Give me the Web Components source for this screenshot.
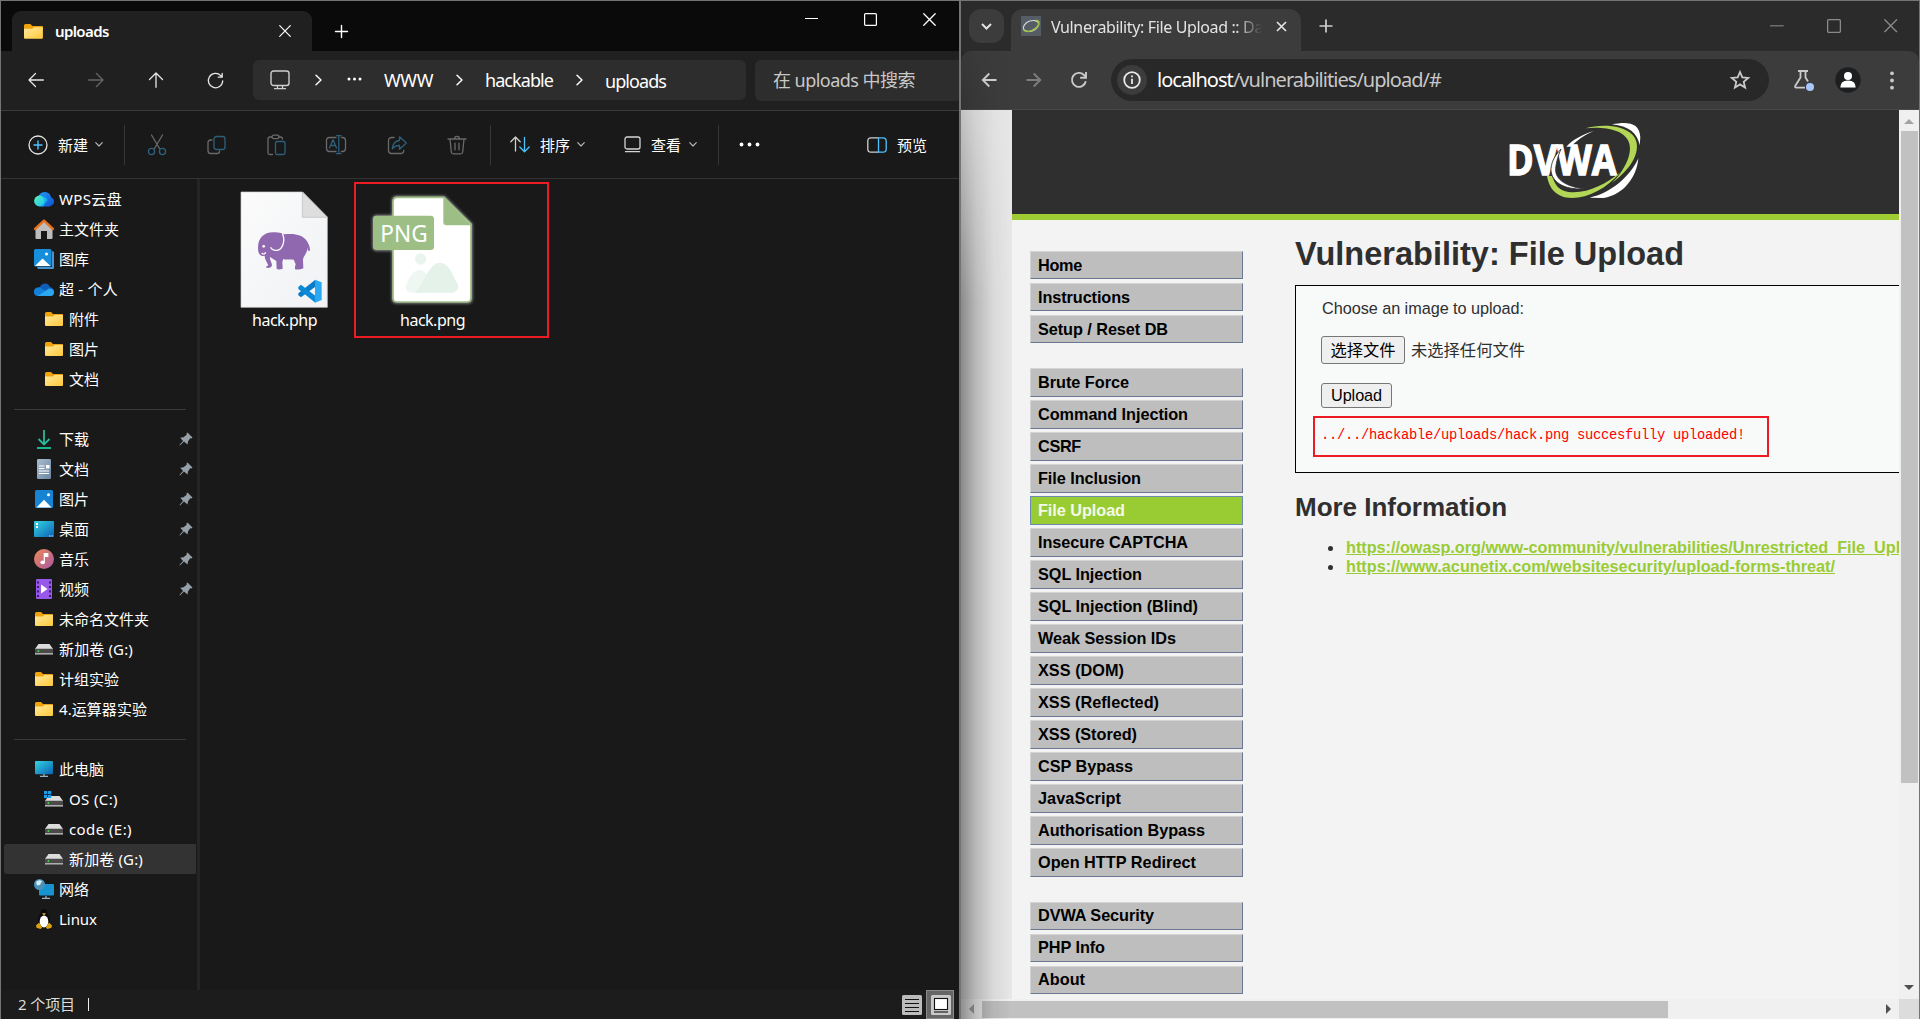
<!DOCTYPE html>
<html lang="zh-CN">
<head>
<meta charset="utf-8">
<title>uploads</title>
<style>
html,body{margin:0;padding:0;background:#191919}
body{width:1920px;height:1019px;overflow:hidden;font-family:"Noto Sans","Noto Sans CJK SC",sans-serif}
</style>
</head>
<body>
<split-desktop>
  <file-explorer slot="left"></file-explorer>
  <web-browser slot="right"><dvwa-page></dvwa-page></web-browser>
</split-desktop>
<script>
// Every glyph is drawn in pixel units: [width, height, markup]
const folder = `<path d="M0 1.5Q0 0 1.5 0H6l2 2h9.500Q18 2 18 3V6H0Z" fill="#f0a30a"/><path d="M0 4.500H8L9.500 3H18V13Q18 14 17 14H1Q0 14 0 13Z" fill="url(#fo)"/><defs><linearGradient id="fo" x1="0" y1="0" x2="1" y2="1"><stop offset="0" stop-color="#ffe9a0"/><stop offset="1" stop-color="#ffc938"/></linearGradient></defs>`;
const disk = `<path d="M3.500 0h11L18 5v5.500H0V5Z" fill="#dcdcdc"/><rect y="4.800" width="18" height="6" rx=".8" fill="#4a4a4a"/><path d="M0 9.700h18" stroke="#b9b9b9" stroke-width="1.200"/><circle cx="3.400" cy="7" r=".9" fill="#3fe04a"/>`;
const st = (c, w = 1.3) => `fill="none" stroke="${c}" stroke-width="${w}" stroke-linecap="round" stroke-linejoin="round"`;
const G = '#6a6a6a', B = '#2d607b';
const ICONS = {
  folder: [18, 14, folder],
  x: [12, 12, `<path d="M.7.7 11.300 11.300M11.300.7.7 11.300" ${st('currentColor', 1.2)}/>`],
  plus: [13, 13, `<path d="M6.500.5v12M.5 6.500h12" ${st('currentColor', 1.4)}/>`],
  min: [13, 13, `<path d="M0 6.500h13" stroke="currentColor"/>`],
  max: [13, 13, `<rect x=".6" y=".6" width="11.800" height="11.800" rx="1" fill="none" stroke="currentColor" stroke-width="1.200"/>`],
  back: [16, 16, `<path d="M15.300 8H1M7.500 1.500 1 8l6.500 6.500" ${st('currentColor')}/>`],
  fwd: [16, 16, `<path d="M.7 8H15M8.500 1.500 15 8l-6.500 6.500" ${st('currentColor')}/>`],
  up: [16, 16, `<path d="M8 15.300V1M1.500 7.500 8 1l6.500 6.500" ${st('currentColor')}/>`],
  reload: [17, 17, `<path d="M15.700 9a7.200 7.200 0 1 1-2-5.400L15 5M15.200 1.500V5.200H11.300" ${st('currentColor')}/>`],
  monitor: [20, 20, `<rect x="1" y="1" width="18" height="14.500" rx="2.500" ${st('#cfcfcf', 1.4)}/><path d="M7.500 16v2.500M12.500 16v2.500M4.500 18.700h11" ${st('#cfcfcf', 1.3)}/>`],
  chev: [7, 12, `<path d="M1 1.200 6 6 1 10.800" ${st('#fff', 1.4)}/>`],
  down: [8, 5, `<path d="M.7.700 4 4 7.300.700" ${st('#bbb', 1.1)}/>`],
  dots: [15, 4, `<g fill="#fff"><circle cx="2" cy="2" r="1.500"/><circle cx="7.500" cy="2" r="1.500"/><circle cx="13" cy="2" r="1.500"/></g>`],
  more: [21, 5, `<g fill="#fff"><circle cx="2.500" cy="2.500" r="1.900"/><circle cx="10.500" cy="2.500" r="1.900"/><circle cx="18.500" cy="2.500" r="1.900"/></g>`],
  add: [20, 20, `<circle cx="10" cy="10" r="9" ${st('#e4e4e4')}/><path d="M10 6v8M6 10h8" ${st('#4cc2ff', 1.4)}/>`],
  cut: [20, 22, `<path d="M4.500 1 12.500 14.500M15.500 1 7.500 14.500" ${st(G)}/><circle cx="4.500" cy="17.500" r="3.100" ${st(B)}/><circle cx="15.500" cy="17.500" r="3.100" ${st(B)}/>`],
  copy: [20, 20, `<g transform="translate(.5 0)"><path d="M5.500 5H4Q1.500 5 1.500 7.500v8Q1.500 18.500 4 18.500h6.500Q13 18.500 13 16.500V16" ${st(G)}/><rect x="7.500" y="1.500" width="11" height="13" rx="2.500" ${st(B)}/></g>`],
  paste: [20, 22, `<g transform="translate(.5 0)"><path d="M5.500 3H3.500Q1.500 3 1.500 5v14Q1.500 20.500 3.500 20.500H6M12.500 3H14Q16 3 16 5" ${st(G)}/><rect x="5.500" y="1.200" width="7" height="3.400" rx="1.600" ${st(G)}/><rect x="9" y="7.500" width="9.500" height="13" rx="1.500" ${st(B)}/></g>`],
  rename: [22, 20, `<path d="M11 2.500H4.500Q1.500 2.500 1.500 5.500v8Q1.500 16.500 4.500 16.500H11M16.500 2.500h1Q20.500 2.500 20.500 5.500v8q0 3-3 3h-1" ${st(G)}/><path d="m4.500 13 3.300-8h.4l3.300 8M5.700 10.500h4.600M13.800.7v18M11.500.7h4.600M11.500 18.700h4.600" ${st(B)}/>`],
  share: [21, 20, `<path d="M7 2.500H5Q1.500 2.500 1.500 5.500v10Q1.500 18.500 4.500 18.500h9Q16.800 18.500 16.800 15.500" ${st(G)}/><path d="M12.500 5.500V1.800L19.300 8l-6.800 6.200v-3.700Q8 10.300 5.300 13.800 6 6 12.500 5.500Z" ${st(B)}/>`],
  trash: [20, 20, `<path d="M1 4h18M7.500 4Q7.500 1.300 10 1.300T12.500 4M3 4.200 4.300 17Q4.500 18.800 6.300 18.800h7.400Q15.500 18.800 15.700 17L17 4.200M8 8.200v6.600M12 8.200v6.600" ${st(G)}/>`],
  sort: [20, 17, `<path d="M5.500 15V1M.8 5.700 5.500 1l4.700 4.700" ${st('#cfcfcf')}/><path d="M14.500 1.500v14M9.800 11l4.700 4.700L19.200 11" ${st('#4cc2ff')}/>`],
  view: [17, 17, `<rect x="1" y="1" width="15" height="12" rx="2" ${st('#d5d5d5')}/><path d="M1.500 15.700h14" ${st('#d5d5d5')}/>`],
  preview: [20, 16, `<path d="M11 .8H4Q.8.8.8 4v8Q.8 15.200 4 15.200h7" ${st('#cfcfcf')}/><path d="M11.500.8H16Q19.200.8 19.200 4v8q0 3.200-3.200 3.200h-4.500Z" ${st('#4cc2ff')}/>`],
  wps: [20, 15, `<defs><linearGradient id="w1" x1="0" y1="0" x2="1" y2="1"><stop offset="0" stop-color="#5ff0b4"/><stop offset="1" stop-color="#16c4f5"/></linearGradient><linearGradient id="w2" x1="0" y1="0" x2="1" y2="1"><stop offset="0" stop-color="#1f9cf5"/><stop offset="1" stop-color="#1350d0"/></linearGradient></defs><path d="M4.500 4Q6.500 0 11 0 16 .3 17 5.200 20 6.500 20 9.700T15.500 14.400H8Z" fill="url(#w2)"/><circle cx="5.500" cy="9" r="5.400" fill="url(#w1)"/><path d="M5.500 14.400Q10 14 11.500 9.500L8.500 4.500Q12.500 5 13.500 8L9 14.400Z" fill="#19b4f7"/>`],
  home: [20, 20, `<path d="M1.500 9 10 2l8.500 7v10q0 1-1 1H13v-8H7v8H2.500q-1 0-1-1Z" fill="#bdbdbd"/><path d="M1 10 10 1.700 19 10" fill="none" stroke="#e8701a" stroke-width="2.400" stroke-linecap="round" stroke-linejoin="round"/>`],
  gallery: [20, 20, `<path d="M3 18h15V2l2 1v15.500q0 1.500-1 1.500H4Z" fill="#4b93cf"/><rect width="17.500" height="17.500" rx="1.500" fill="#178edb"/><path d="M1 17 8.500 9.500 16.500 17Z" fill="#fff"/><circle cx="12.500" cy="5" r="1.500" fill="#fff"/>`],
  onedrive: [20, 13, `<path d="M3.500 12.500A4 4 0 0 1 2 5Q4 4 5.500 4.500C8-.5 14-1 16 4q4 1 4 5T16 12.500Z" fill="#0f5fb8"/><path d="M0 8.500Q1 4 6 4.500l8 5L5 13H4Q0 13 0 8.500" fill="#1280d8"/><path d="M4 12.700 15 5.500Q20 5.500 20 9.200T16.500 13H4Z" fill="#2aa7ee"/>`],
  download: [16, 20, `<path d="M8 1v14M2.500 10 8 15.500 13.500 10" fill="none" stroke="#27b99a" stroke-width="1.800"/><path d="M1 19h14" stroke="#1fc7a0" stroke-width="1.800"/>`],
  doc: [14, 20, `<defs><linearGradient id="dc" x1="0" y1="0" x2="1" y2="1"><stop offset="0" stop-color="#a9bdd0"/><stop offset="1" stop-color="#6b86a3"/></linearGradient></defs><rect width="14" height="20" rx="1.200" fill="url(#dc)"/><path d="M2 7h5.500M2 9.500h5.500M2 12h10M2 14.500h10" stroke="#fff" stroke-width="1.100"/><path d="M9 6h3.500v3.500H9Z" fill="#fff"/>`],
  pic: [18, 18, `<rect width="18" height="18" rx="1.500" fill="#1784d3"/><path d="M1.500 17.500 9 9.700l7.500 7.800Z" fill="#fff"/><circle cx="13.500" cy="4.700" r="1.500" fill="#fff"/>`],
  desk: [20, 16, `<defs><linearGradient id="dk" x1="0" y1="0" x2="1" y2="1"><stop offset="0" stop-color="#35d4e0"/><stop offset="1" stop-color="#0b62b8"/></linearGradient></defs><rect width="20" height="16" rx="1" fill="url(#dk)"/><path d="M2 2h2v2H2ZM2 5h2v2H2Z" fill="#fff"/><path d="M15 15h1.500M17.500 15H19" stroke="#bfe3ff"/>`],
  music: [20, 20, `<defs><linearGradient id="mu" x1="0" y1="0" x2="1" y2="1"><stop offset="0" stop-color="#f08a55"/><stop offset="1" stop-color="#a857a5"/></linearGradient></defs><circle cx="10" cy="10" r="10" fill="url(#mu)"/><ellipse cx="8.700" cy="13.300" rx="2.300" ry="1.900" fill="#fff"/><path d="M10.300 13.300V4.500h3.500v3h-3" fill="#fff" stroke="#fff" stroke-width="1.200"/>`],
  video: [16, 20, `<rect width="16" height="20" rx="1.300" fill="#9858ea"/><path d="M2 2.500v16M14 2.500v16" stroke="#3d1a72" stroke-width="2" stroke-dasharray="2 2.500"/><path d="m5 5.500 6.500 4.500L5 14.500Z" fill="#fff"/>`],
  disk: [18, 11, disk],
  osdisk: [20, 16, `<g transform="translate(1 5)">${disk}</g><path d="M0 0H3.300V3.200H0ZM4 0H7.300V3.200H4ZM0 4H3.300V7H0ZM4 4H7.300V7H4Z" fill="#1e9bea"/>`],
  pc: [18, 16, `<defs><linearGradient id="pc" x1="0" y1="0" x2="1" y2="1"><stop offset="0" stop-color="#34d3df"/><stop offset="1" stop-color="#0a62b5"/></linearGradient></defs><rect width="18" height="13.300" rx="1" fill="url(#pc)"/><path d="M9 13v2M5 15.300h8" stroke="#9db0bd" stroke-width="1.300"/>`],
  net: [20, 20, `<rect x="5" y="5" width="15" height="11.500" rx="1" fill="#1793cf"/><path d="M12 17v2M8 19.300h8" stroke="#9db0bd" stroke-width="1.300"/><circle cx="5.500" cy="5.500" r="5.500" fill="#4a92b8"/><path d="M2 3Q5 0 8 2L6 6 3 6.500Z" fill="#d2ecf3"/>`],
  tux: [16, 20, `<path d="M8 0Q11 0 11.200 4 14.500 9 14.200 15L11 19H5L1.800 15Q1.500 9 4.800 4 5 0 8 0" fill="#0b0b0b"/><ellipse cx="8" cy="12.500" rx="4.300" ry="6" fill="#fff"/><path d="M6 4.200h4L8 6.500Z" fill="#f2b233"/><path d="M0 16.500 3 13.500 6.300 18.500 4.500 20 .5 18.700ZM16 16.500 13 13.500 9.700 18.500 11.500 20 15.500 18.700Z" fill="#dba216"/>`],
  pin: [14, 14, `<path d="M8.500.5 13.500 5.500 12.500 6.500 11.200 6.300 9 9.500 8.500 12.500 5 9.500 1 13.500.5 13 4 9 1.300 5.700 4.500 5.200 7.700 2.800 7.500 1.500Z" fill="#96a0a8"/>`],
  listview: [20, 20, `<rect width="20" height="20" rx="1.500" fill="#bcbcbc"/><path d="M3 4.500h14M3 8.500h14M3 12.500h14M3 16.500h14" stroke="#111" stroke-width="1.100"/>`],
  largeview: [20, 20, `<rect width="20" height="20" rx="1.500" fill="#c9c9c9"/><rect x="3.500" y="3.500" width="13" height="11" fill="#fff" stroke="#111" stroke-width="1.100"/><path d="M3 17h14" stroke="#111" stroke-width="1.100"/>`],
  cdown: [11, 7, `<path d="M1 1 5.500 5.500 10 1" fill="none" stroke="#e3e3e3" stroke-width="2"/>`],
  favicon: [20, 20, `<rect width="20" height="20" fill="#555c66"/><ellipse cx="10" cy="10" rx="8" ry="5" transform="rotate(-22 10 10)" fill="none" stroke="#d4d8da" stroke-width="1.100"/><path d="M2.300 13.500Q4 17 11 14.500 18.500 11 18 6 17.500 4.300 15 4.200" fill="none" stroke="#9dc043" stroke-width="1.500"/>`],
  cback: [16, 16, `<path d="M15.500 8H2M8.300 1.500 1.800 8l6.500 6.500" fill="none" stroke="currentColor" stroke-width="1.900"/>`],
  cfwd: [16, 16, `<path d="M.5 8H14M7.700 1.500 14.200 8l-6.500 6.500" fill="none" stroke="currentColor" stroke-width="1.900"/>`],
  creload: [18, 18, `<path d="M15.800 10.300A7 7 0 1 1 14 4L16 6" fill="none" stroke="#c9c9c9" stroke-width="1.900"/><path d="M16 1v5.800h-5.800" fill="none" stroke="#c9c9c9" stroke-width="1.900"/>`],
  cx: [11, 11, `<path d="M1 1 10 10M10 1 1 10" stroke="currentColor" stroke-width="1.700"/>`],
  cplus: [14, 14, `<path d="M7 .5v13M.5 7h13" stroke="#d0d0d0" stroke-width="1.700"/>`],
  info: [30, 30, `<circle cx="15" cy="15" r="15" fill="#3c3c3c"/><circle cx="15" cy="15" r="7.800" fill="none" stroke="#e8e8e8" stroke-width="1.800"/><path d="M15 13.800v5.200M15 10.500v1.800" stroke="#e8e8e8" stroke-width="1.800"/>`],
  star: [20, 20, `<path d="M10 2 12.300 7.400 18.200 7.900 13.700 11.800 15.100 17.500 10 14.400 4.900 17.500 6.300 11.800 1.800 7.900 7.700 7.400Z" fill="none" stroke="#c9c9c9" stroke-width="1.800"/>`],
  flask: [22, 22, `<path d="M5 2h10M7.500 2v6.500L2.200 17q-.6 1.600 1 1.600H12M12.500 2v6.500L15 12.500" fill="none" stroke="#c9c9c9" stroke-width="1.800"/><circle cx="17" cy="18" r="4" fill="#a8c7fa"/>`],
  avatar: [26, 26, `<circle cx="13" cy="13" r="12.700" fill="#1c1e1f"/><circle cx="13" cy="9" r="4" fill="#fff"/><path d="M5.300 20.500Q5.300 13.500 13 13.500T20.700 20.500Z" fill="#fff"/>`],
  kebab: [4, 19, `<g fill="#c9c9c9"><circle cx="2" cy="2.300" r="1.900"/><circle cx="2" cy="9.500" r="1.900"/><circle cx="2" cy="16.700" r="1.900"/></g>`],
  tri: [10, 5, `<path d="M0 5 5 0 10 5Z" fill="currentColor"/>`],
  triD: [10, 5, `<path d="M0 0 5 5 10 0Z" fill="currentColor"/>`],
  triL: [5, 10, `<path d="M5 0 0 5 5 10Z" fill="currentColor"/>`],
  triR: [5, 10, `<path d="M0 0 5 5 0 10Z" fill="currentColor"/>`]
};
const define = (name, html, init) => customElements.define(name, class extends HTMLElement {
  connectedCallback() {
    if (this.shadowRoot) return;
    this.attachShadow({ mode: 'open' }).innerHTML = typeof html === 'function' ? html(this) : html;
    if (init) init(this);
  }
});

define('ui-icon', el => {
  const [w, h, m] = ICONS[el.getAttribute('name')];
  const k = +(el.getAttribute('scale') || 1);
  return `<style>:host{display:block;flex:none;width:${w * k}px;height:${h * k}px}svg{display:block;overflow:visible}</style><svg width="${w * k}" height="${h * k}" viewBox="0 0 ${w} ${h}">${m}</svg>`;
});

define('split-desktop', `<style>:host{display:grid;grid-template-columns:960px 960px;height:1019px;overflow:hidden}</style><slot name="left"></slot><slot name="right"></slot>`);

/* ---------- File explorer ---------- */
define('explorer-tabs', `<style>
:host{display:flex;height:50px;background:#0a0a0a;color:#fff;align-items:flex-start}
.tab{display:flex;align-items:center;box-sizing:border-box;width:300px;height:40px;margin:10px 0 0 11px;padding:0 21px 0 12px;background:#202020;border-radius:9px 9px 0 0;font:600 15px/22px "Noto Sans"}
.tab fit-text{margin:0 auto 0 12px}
.tab ui-icon[name=x]{margin-top:-1px}
.new{margin:24px auto 0 22.500px}
.ctl{display:flex;gap:46px;margin:12px 23.500px 0 0}
.ctl ui-icon[name=min]{margin-top:-1px}
</style><div class="tab"><ui-icon name="folder" scale="1.05"></ui-icon><fit-text w="54">uploads</fit-text><ui-icon name="x"></ui-icon></div><ui-icon class="new" name="plus"></ui-icon><div class="ctl"><ui-icon name="min"></ui-icon><ui-icon name="max"></ui-icon><ui-icon name="x" scale="1.080"></ui-icon></div>`);

define('explorer-nav', `<style>
:host{display:flex;height:59px;background:#202020;border-bottom:1px solid #3a3a3a;color:#e8e8e8;font:18px/26px "Noto Sans","Noto Sans CJK SC",sans-serif}
.btns{display:flex;align-items:center;gap:44px;flex:none;padding:0 0 1px 26.500px;box-sizing:border-box;width:252px}
.bar{display:flex;align-items:center;box-sizing:border-box;background:#2d2d2d;height:40px;margin-top:9px;border-radius:6px;color:#fff;padding-bottom:1px}
.addr{width:493px;padding-left:17px}
.search{width:204px;height:41px;margin-left:9px;padding-left:18px;color:#c8c8c8;border-radius:6px 0 0 6px}
</style><div class="btns"><ui-icon name="back"></ui-icon><ui-icon name="fwd" style="color:#666"></ui-icon><ui-icon name="up"></ui-icon><ui-icon name="reload" style="margin-left:-.5px"></ui-icon></div>
<div class="bar addr"><ui-icon name="monitor"></ui-icon><ui-icon name="chev" style="margin-left:25px"></ui-icon><ui-icon name="dots" style="margin:-2px 0 0 25px"></ui-icon><fit-text w="49" style="margin-left:22px">WWW</fit-text><ui-icon name="chev" style="margin-left:23px"></ui-icon><fit-text w="68" style="margin-left:22px">hackable</fit-text><ui-icon name="chev" style="margin-left:23px"></ui-icon><fit-text w="61" style="margin:2px 0 0 22px">uploads</fit-text></div>
<div class="bar search"><fit-text w="142">在 uploads 中搜索</fit-text></div>`);

define('tool-label', `<style>:host{display:flex;align-items:center;font:15px/22px "Noto Sans CJK SC",sans-serif;color:#fff}span{width:30px;margin:0 7px 0 0;white-space:nowrap}</style><slot name="icon"></slot><span><slot></slot></span>`);

define('explorer-tools', `<style>
:host{display:flex;align-items:center;height:67px;box-sizing:content-box;background:#191919;border-bottom:1px solid #333;padding-left:27px}
i{width:1px;height:40px;background:#363636}
.acts{display:flex;align-items:center;justify-content:space-between;width:320px;margin:0 23px 0 22px}
tool-label ui-icon{margin-right:10px}
</style><tool-label><ui-icon slot="icon" name="add"></ui-icon>新建</tool-label><ui-icon name="down" style="margin-left:0"></ui-icon><i style="margin-left:21px"></i>
<div class="acts"><ui-icon name="cut"></ui-icon><ui-icon name="copy"></ui-icon><ui-icon name="paste"></ui-icon><ui-icon name="rename"></ui-icon><ui-icon name="share"></ui-icon><ui-icon name="trash"></ui-icon></div><i></i>
<tool-label style="margin-left:19px"><ui-icon slot="icon" name="sort"></ui-icon>排序</tool-label><ui-icon name="down"></ui-icon>
<tool-label style="margin-left:39px"><ui-icon slot="icon" name="view"></ui-icon>查看</tool-label><ui-icon name="down" style="margin-left:1px"></ui-icon><i style="margin-left:21px"></i>
<ui-icon name="more" style="margin-left:20px"></ui-icon>
<tool-label style="margin:0 25px 0 auto"><ui-icon slot="icon" name="preview"></ui-icon>预览</tool-label>`);

define('tree-item', el => `<style>
:host{display:flex;align-items:center;box-sizing:border-box;height:30px;margin:0 0 0 3px;padding:0 4px 0 30px;color:#fff;font:15px/22px "Noto Sans","Noto Sans CJK SC",sans-serif}
:host([sub]){padding-left:40px}
:host([on]){background:linear-gradient(#333,#333) 0 0/192px 30px no-repeat;border-radius:3px}
.ic{width:20px;display:flex;justify-content:center;margin-right:5px;flex:none}
fit-text{margin-right:auto}
</style><div class="ic"><ui-icon name="${el.getAttribute('icon')}"></ui-icon></div><fit-text w="${el.getAttribute('w')}"><slot></slot></fit-text>${el.hasAttribute('pin') ? '<ui-icon name="pin"></ui-icon>' : ''}`);

define('explorer-tree', () => {
  const rows = [['wps', 'WPS云盘', 63], ['home', '主文件夹', 60], ['gallery', '图库', 30], ['onedrive', '超 - 个人', 59], ['folder', '附件', 30, 'sub'], ['folder', '图片', 30, 'sub'], ['folder', '文档', 30, 'sub'], 0,
    ['download', '下载', 30, 'pin'], ['doc', '文档', 30, 'pin'], ['pic', '图片', 30, 'pin'], ['desk', '桌面', 30, 'pin'], ['music', '音乐', 30, 'pin'], ['video', '视频', 30, 'pin'], ['folder', '未命名文件夹', 90], ['disk', '新加卷 (G:)', 74], ['folder', '计组实验', 60], ['folder', '4.运算器实验', 88], 0,
    ['pc', '此电脑', 45], ['osdisk', 'OS (C:)', 49, 'sub'], ['disk', 'code (E:)', 63, 'sub'], ['disk', '新加卷 (G:)', 74, 'sub on'], ['net', '网络', 30], ['tux', 'Linux', 38]];
  return `<style>:host{display:block;box-sizing:border-box;width:199px;padding-top:5px;border-right:3px solid #252525;flex:none}hr{height:1px;border:0;margin:15px 11px 14px 13px;background:#3a3a3a}</style>` +
    rows.map(r => r ? `<tree-item icon="${r[0]}" w="${r[2]}" ${r[3] || ''}>${r[1]}</tree-item>` : '<hr>').join('');
});

define('file-tile', `<style>:host{display:block;font:16px/24px "Noto Sans";color:#fff}svg,::slotted(svg){display:block}</style><slot></slot>`);

define('explorer-files', `<style>
:host{display:flex;align-items:flex-start;flex:1}
svg{display:block}
.php{width:140px;margin:12px 0 0 14px}
.php svg{margin-left:26px}.php fit-text{margin-left:38px}
.png{box-sizing:border-box;width:195px;height:156px;margin-top:3px;border:2px solid #ed1c24;padding:9px 0 0 14px}
.png fit-text{margin:2px 0 0 30px}
</style>
<file-tile class="php"><svg width="88" height="117.330" viewBox="60 64 264 352"><defs><linearGradient id="g" x1="0" y1="0" x2="1" y2="1"><stop offset="0" stop-color="#fbfbfb"/><stop offset="1" stop-color="#f0f2f5"/></linearGradient></defs>
<path d="M63 67H248L322 142V413H63Z" fill="url(#g)" stroke="#cfcfcf" stroke-width="2"/><path d="M247 67V143H322Z" fill="#dedede" stroke="#bbb" stroke-width="2"/>
<path d="M115 246C110 212 126 188 160 188C176 187 188 191 193 194C222 190 250 195 262 216C268 226 270 234 270 243H264L262 234C262 252 250 258 249 270L250 296Q240 301 225 299L225 291 227 284 221 270C210 268 198 271 190 268L187 276 188 297Q178 301 170 298L169 274 163 270 150 262C148 270 156 278 156 287C154 296 142 297 137 292L145 287C140 276 134 268 134 258C126 262 118 256 115 246Z" fill="#9068b0"/>
<path d="M187 191C198 215 186 243 168 242C158 242 154 238 152 233M125 250Q133 258 137 248" fill="none" stroke="#fff" stroke-width="4"/><circle cx="131" cy="230" r="4" fill="#fff"/>
<path d="M286 330V351L243 383 235 377V371Z" fill="#0a7dc9"/><path d="M286 399V378L243 345 235 352V358Z" fill="#0a8ad6"/><path d="M285 330 305 338V391L285 399Z" fill="#2aa9f2"/></svg><fit-text w="65">hack.php</fit-text></file-tile>
<file-tile class="png"><svg width="106.670" height="113.330" viewBox="450 70 320 340"><defs><filter id="b" x="-10%" y="-10%" width="120%" height="120%"><feGaussianBlur stdDeviation="4"/></filter></defs>
<g filter="url(#b)" opacity=".6"><rect x="458" y="137" width="186" height="106" rx="12" fill="#eee"/><path d="M530 79H674L757 162V388Q757 401 744 401H530Q516 401 516 388V94Q516 79 530 79" fill="#eee"/></g>
<path d="M532 83H672L753 163V384Q753 397 740 397H532Q519 397 519 384V96Q519 83 532 83" fill="#fff" stroke="#9dbf86" stroke-width="5"/>
<path d="M670 82 754 167H680Q670 167 670 157Z" fill="#9dbf86"/><rect x="459" y="138" width="183" height="103" rx="10" fill="#9dbf86"/>
<text x="481" y="217" font-family="Noto Sans" font-size="70" textLength="142" lengthAdjust="spacingAndGlyphs" fill="#fff">PNG</text>
<circle cx="602" cy="268" r="17" fill="#eaf4ef"/><path d="M557 352C565 325 578 302 598 302C620 302 640 335 640 369H578Q555 369 557 352" fill="#eff7f3"/><path d="M585 369C610 350 625 279 660 279C690 279 700 325 713 342C719 355 710 369 695 369Z" fill="#e4f2ea"/></svg><fit-text w="65">hack.png</fit-text></file-tile>`);

define('explorer-status', `<style>:host{display:flex;align-items:center;height:29px;background:#1c1c1c;color:#ddd;font:15px/22px "Noto Sans","Noto Sans CJK SC",sans-serif;padding-left:17px}
fit-text{margin-top:-2px}
b{width:1px;height:13px;background:#eee;margin:0 auto 0 13px}
.on{display:flex;box-sizing:border-box;width:28px;height:29px;justify-content:center;align-items:center;background:#666;border:1px solid #8a8a8a;padding-left:1px;margin:0 5px 0 4px}</style><fit-text w="57">2 个项目</fit-text><b></b><ui-icon name="listview"></ui-icon><div class="on"><ui-icon name="largeview"></ui-icon></div>`);

define('file-explorer', `<style>:host{display:flex;flex-direction:column;box-sizing:border-box;width:960px;height:1019px;background:#191919;border:1px solid #747474;border-bottom:0}.mid{display:flex;height:811px}</style>
<explorer-tabs></explorer-tabs><explorer-nav></explorer-nav><explorer-tools></explorer-tools><div class="mid"><explorer-tree></explorer-tree><explorer-files></explorer-files></div><explorer-status></explorer-status>`);

/* ---------- Browser ---------- */
define('browser-tabs', `<style>
:host{display:flex;height:50px;background:#2b2b2b;color:#e3e3e3;align-items:flex-start}
.drop{display:flex;align-items:center;justify-content:center;width:35px;height:34px;margin:8px 0 0 8px;border-radius:12px;background:#3c3c3c}
.tab{display:flex;align-items:center;box-sizing:border-box;width:290px;height:42px;margin:8px 0 0 7px;padding:0 14px 8px 10px;border-radius:12px 12px 0 0;background:#3c3c3c;font:16px/24px "Noto Sans"}
.t{width:211px;height:24px;margin:2px auto 0 10px;overflow:hidden;-webkit-mask-image:linear-gradient(90deg,#000 185px,transparent 211px);mask-image:linear-gradient(90deg,#000 185px,transparent 211px)}
.ctl{display:flex;gap:43px;margin:18px 22px 0 auto;color:#8a8a8a}
</style><div class="drop"><ui-icon name="cdown"></ui-icon></div><div class="tab"><ui-icon name="favicon"></ui-icon><div class="t"><fit-text w="212">Vulnerability: File Upload :: Da</fit-text></div><ui-icon name="cx"></ui-icon></div><ui-icon name="cplus" style="margin:18px 0 0 18px"></ui-icon>
<div class="ctl"><ui-icon name="min" scale="1.050"></ui-icon><ui-icon name="max" scale="1.080"></ui-icon><ui-icon name="x" scale="1.120"></ui-icon></div>`);

define('browser-bar', `<style>
:host{display:flex;align-items:center;height:58px;background:#3c3c3c;border-bottom:1px solid #484848;color:#d0d0d0;border-radius:10px 10px 0 0}
.omni{display:flex;align-items:center;box-sizing:border-box;width:658px;height:42px;border-radius:21px;background:#282828;padding:0 19px 0 6px;margin:0 23.500px 0 23px;font:20px/28px "Noto Sans";color:#c7c7c7}
.omni b{font-weight:400;color:#fff}
.omni fit-text{margin:0 auto 0 10px}
</style><ui-icon name="cback" style="margin-left:19.500px"></ui-icon><ui-icon name="cfwd" style="margin-left:29px;color:#7d7d7d"></ui-icon><ui-icon name="creload" style="margin-left:28.500px"></ui-icon>
<div class="omni"><ui-icon name="info"></ui-icon><fit-text w="284"><b>localhost</b>/vulnerabilities/upload/#</fit-text><ui-icon name="star"></ui-icon></div>
<ui-icon name="flask"></ui-icon><ui-icon name="avatar" style="margin-left:20px"></ui-icon><ui-icon name="kebab" style="margin-left:29.500px"></ui-icon>`);

define('scroll-bar', el => el.hasAttribute('vertical')
  ? `<style>:host{display:flex;flex-direction:column;align-items:center;justify-content:space-between;box-sizing:border-box;background:#f0f0f0;padding:9px 0 9px;color:#a3a3a3}.th{width:17px;height:652px;background:#c1c1c1;margin:7px 0 auto}</style><ui-icon name="tri"></ui-icon><div class="th"></div><ui-icon name="triD" style="color:#505050"></ui-icon>`
  : `<style>:host{display:flex;align-items:center;justify-content:space-between;box-sizing:border-box;background:#f0f0f0;padding:0 8px;color:#a3a3a3}.th{height:17px;width:686px;background:#c1c1c1;margin:0 auto 0 8px}</style><ui-icon name="triL"></ui-icon><div class="th"></div><ui-icon name="triR" style="color:#505050"></ui-icon>`);

define('web-browser', `<style>
:host{display:grid;grid-template-rows:50px 59px 910px;box-sizing:border-box;position:relative;width:960px;height:1019px;background:#2b2b2b;border:1px solid #747474;border-bottom:0}
.view{display:grid;grid-template-columns:938px 20px;grid-template-rows:889px 20px}
.c{background:#dcdcdc}
.shade{position:absolute;left:0;top:51px;bottom:0;width:50px;background:linear-gradient(90deg,rgba(0,0,0,.4),rgba(0,0,0,.2) 30%,rgba(0,0,0,.06) 65%,transparent);-webkit-mask-image:linear-gradient(rgba(0,0,0,.15),rgba(0,0,0,.4) 60px,#000 250px);mask-image:linear-gradient(rgba(0,0,0,.15),rgba(0,0,0,.4) 60px,#000 250px)}
</style><browser-tabs></browser-tabs><browser-bar></browser-bar><div class="view"><slot></slot><scroll-bar vertical></scroll-bar><scroll-bar></scroll-bar><div class="c"></div></div><div class="shade"></div>`);

/* ---------- DVWA ---------- */
define('dvwa-logo', `<style>:host{display:block;width:136.670px;height:80px}svg{display:block}</style>
<svg width="136.670" height="80" viewBox="200 360 410 240"><path d="M435 385C480 372 545 374 575 403C606 433 590 495 515 549C550 515 580 460 565 425C550 388 490 379 435 385Z" fill="#b2d655"/>
<g fill="#fff"><path d="M515 373C560 364 598 366 600 412L598 436C592 400 565 378 515 373Z"/><path d="M594 475C590 530 550 585 490 594L448 593C510 580 570 530 594 475Z"/></g>
<path d="M460 393C430 402 395 420 378 440L392 440C405 425 430 406 460 393Z" fill="#fff"/>
<text x="200" y="524" font-family="Open Sans" font-weight="700" font-size="124" textLength="329" lengthAdjust="spacingAndGlyphs" fill="#fff" stroke="#fff" stroke-width="4" paint-order="stroke">DVWA</text>
<path d="M320 528C325 560 345 594 395 594C445 594 500 565 540 517C500 550 450 577 400 577C355 577 345 555 335 528Z" fill="#b2d655"/>
<path d="M362 447C346 465 335 480 332 505C330 545 370 570 432 567C380 560 343 540 346 505C348 485 353 468 362 447Z" fill="#fff" stroke="#2f2f2f" stroke-width="2.500"/></svg>`);

define('menu-item', `<style>
:host{display:block;box-sizing:border-box;width:213px;height:28px;margin-bottom:4px;padding-left:7px;border:1px solid;border-color:#d4d4d4 #6b7894 #6b7894 #d4d4d4;background:#bebebe;color:#000;font:700 16.250px/27px "Liberation Sans"}
:host([tall]){height:29px;margin-bottom:3px}
:host([on]){background:#9c3;color:#f4f9e8;border-color:#6b8cb0}
</style><slot></slot>`);

define('dvwa-menu', () => {
  const groups = [[['Home', 44], ['Instructions', 92], ['Setup / Reset DB', 130]],
    [['Brute Force', 91], ['Command Injection', 150], ['CSRF', 43], ['File Inclusion', 103], ['File Upload', 87], ['Insecure CAPTCHA', 150], ['SQL Injection', 104], ['SQL Injection (Blind)', 160], ['Weak Session IDs', 138], ['XSS (DOM)', 86], ['XSS (Reflected)', 121], ['XSS (Stored)', 99], ['CSP Bypass', 95], ['JavaScript', 83], ['Authorisation Bypass', 167], ['Open HTTP Redirect', 158]],
    [['DVWA Security', 116], ['PHP Info', 67], ['About', 47]]];
  return `<style>:host{display:block;width:213px}div{margin-bottom:25px}.last menu-item{line-height:25px}</style>` + groups.map((g, i) => `<div class="${i == 2 ? 'last' : ''}">${g.map(t => `<menu-item ${i == 1 ? 'tall' : ''} ${t[0] == 'File Upload' ? 'on' : ''}><fit-text w="${t[1]}">${t[0]}</fit-text></menu-item>`).join('')}</div>`).join('');
});

define('upload-form', `<style>
:host{display:block;box-sizing:border-box;width:760px;height:188px;border:1px solid #000;background:#f8fafa;color:#2f2f2f;font:16.250px/20px "Liberation Sans","Noto Sans CJK SC",sans-serif;padding:12px 0 0 25px}
.row{display:flex;align-items:center;gap:6px;margin-top:18px}
button{box-sizing:border-box;background:#efefef;border:1px solid #767676;border-radius:3px;padding:0;font:inherit;color:#000;display:flex;align-items:center;justify-content:center}
.msg{box-sizing:border-box;width:456px;height:41px;margin:8px 0 0 -8px;border:2px solid #ed1c24;padding:9px 0 0 6px;color:#f00;font:13.800px/18px "Liberation Mono",monospace}
</style><fit-text w="202" style="display:block;margin-left:1px">Choose an image to upload:</fit-text>
<div class="row"><button style="width:84px;height:28px"><fit-text w="65">选择文件</fit-text></button><fit-text w="114">未选择任何文件</fit-text></div>
<button style="width:71px;height:25px;margin-top:19px;padding-bottom:1px"><fit-text w="51">Upload</fit-text></button>
<div class="msg"><fit-text w="424">../../hackable/uploads/hack.png succesfully uploaded!</fit-text></div>`);

define('dvwa-page', `<style>
:host{display:flex;overflow:hidden;background:#e7e7e7;padding-left:51px;width:887px;height:889px}
.page{width:887px;flex:none;background:#f3f3f3;overflow:hidden}
header{display:flex;height:104px;background:#2f2f2f;border-bottom:6px solid #9fcb33}
header dvwa-logo{margin:10px 0 0 494.670px}
.cols{display:flex;padding-left:18px}
dvwa-menu{margin-top:31px;flex:none}
main{margin-left:52px;color:#2f2f2f;font-family:"Liberation Sans";white-space:nowrap}
h1{margin:14px 0 11px;font-size:32.500px;line-height:40px}
h2{margin:18px 0 15px;font-size:26px;line-height:32px}
ul{margin:0;padding:0 0 0 51px;list-style:none;font:700 16.250px/19px "Liberation Sans"}
li{display:flex;align-items:center}
li::before{content:"";width:5px;height:5px;border-radius:50%;background:#2f2f2f;margin:1px 13.500px 0 -18.500px}
a{color:#9c3}
a fit-text{text-decoration:underline}
</style><div class="page"><header><dvwa-logo></dvwa-logo></header><div class="cols"><dvwa-menu></dvwa-menu><main><h1><fit-text w="389">Vulnerability: File Upload</fit-text></h1><upload-form></upload-form><h2><fit-text w="212">More Information</fit-text></h2>
<ul><li><a><fit-text w="583">https://owasp.org/www-community/vulnerabilities/Unrestricted_File_Upload</fit-text></a></li><li><a><fit-text w="489">https://www.acunetix.com/websitesecurity/upload-forms-threat/</fit-text></a></li></ul></main></div></div>`);

// Spreads a single line of text over a given width by adjusting its tracking.
define('fit-text', `<style>:host{display:inline-block;white-space:nowrap;flex:none}span{display:inline-block;text-decoration:inherit}</style><span><slot></slot></span>`, el => {
  const span = el.shadowRoot.querySelector('span');
  const slot = el.querySelector('slot');
  const text = slot ? slot.assignedNodes().map(n => n.textContent).join('') : el.textContent;
  const want = +el.getAttribute('w');
  const have = span.getBoundingClientRect().width;
  span.style.letterSpacing = (want - have) / text.length + 'px';
  el.style.width = want + 'px';
});
</script>
</body>
</html>
